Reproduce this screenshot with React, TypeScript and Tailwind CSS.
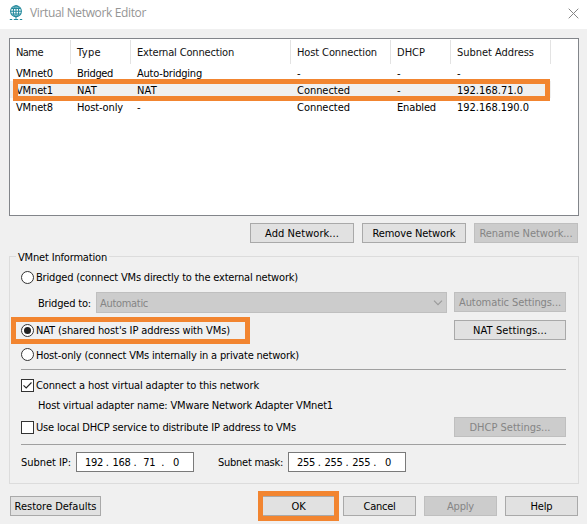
import { useLayoutEffect, useRef, useState } from "react";
import type { ReactNode } from "react";

/* One line of text whose letter spacing is tuned so that it spans `w` pixels. */
function Label({ w, children, className = "" }: { w: number; children: string; className?: string }) {
  const ref = useRef<HTMLSpanElement>(null);
  const [spacing, setSpacing] = useState(0);
  useLayoutEffect(() => {
    const el = ref.current;
    if (!el) return;
    el.style.letterSpacing = "0px";
    const natural = el.getBoundingClientRect().width;
    setSpacing((w - natural) / children.length);
    el.style.letterSpacing = `${(w - natural) / children.length}px`;
  }, [w, children]);
  return (
    <span ref={ref} style={{ letterSpacing: `${spacing}px` }} className={`mt-px -mb-px inline-block whitespace-pre ${className}`}>
      {children}
    </span>
  );
}

function Button({ text, w, className, disabled = false }: { text: string; w: number; className: string; disabled?: boolean }) {
  return (
    <button
      disabled={disabled}
      className={`flex h-5 shrink-0 items-center justify-center border ${
        disabled ? "border-[#bfbfbf] bg-[#cccccc] text-[#858585]" : "border-[#a9a9a9] bg-[#e1e1e1] text-black"
      } ${className}`}
    >
      <Label w={w}>{text}</Label>
    </button>
  );
}

function Radio({ checked = false }: { checked?: boolean }) {
  return (
    <span className="flex size-[13px] shrink-0 items-center justify-center rounded-full border border-[#333] bg-white">
      {checked && <span className="size-[7px] rounded-full bg-[#222]" />}
    </span>
  );
}

function Checkbox({ checked = false }: { checked?: boolean }) {
  return (
    <span className="flex size-[13px] shrink-0 items-center justify-center border border-[#333] bg-white">
      {checked && (
        <svg width="11" height="11" viewBox="0 0 11 11" fill="none" stroke="#222" strokeWidth="1.1">
          <path d="M1.5 5.3 4.2 8 9.5 2.5" />
        </svg>
      )}
    </span>
  );
}

function Row({ className, children }: { className: string; children: ReactNode }) {
  return <div className={`flex items-center ${className}`}>{children}</div>;
}

function IpField({ parts }: { parts: string[] }) {
  return (
    <div className="flex h-5 w-[118px] items-center border border-[#7a7a7a] bg-white pl-[7px] pr-2">
      <span className="flex w-[20px] justify-center"><Label w={18}>{parts[0]}</Label></span>
      <span className="flex w-[8px] justify-center"><Label w={4}>.</Label></span>
      <span className="flex w-[20px] justify-center"><Label w={18}>{parts[1]}</Label></span>
      <span className="flex w-[8px] justify-center"><Label w={4}>.</Label></span>
      <span className="flex w-[20px] justify-center"><Label w={parts[2].length * 6}>{parts[2]}</Label></span>
      <span className="flex w-[8px] justify-center"><Label w={4}>.</Label></span>
      <span className="flex w-[18px] justify-center"><Label w={6}>{parts[3]}</Label></span>
    </div>
  );
}

type Cell = [string, number];
const header: Cell[] = [["Name", 27], ["Type", 24], ["External Connection", 97], ["Host Connection", 80], ["DHCP", 28], ["Subnet Address", 77]];
const rows: Cell[][] = [
  [["VMnet0", 37], ["Bridged", 36], ["Auto-bridging", 65], ["-", 5], ["-", 5], ["-", 5]],
  [["VMnet1", 37], ["NAT", 20], ["NAT", 20], ["Connected", 53], ["-", 5], ["192.168.71.0", 66]],
  [["VMnet8", 37], ["Host-only", 46], ["-", 5], ["Connected", 53], ["Enabled", 39], ["192.168.190.0", 72]],
];
const grid = "grid grid-cols-[61px_60px_160px_100px_60px_100px]";

export default function App() {
  return (
    <div className="flex h-[524px] w-[587px] flex-col overflow-hidden bg-[#f0f0f0] font-['DejaVu_Sans_Condensed','DejaVu_Sans',sans-serif] text-[11px] leading-[14px] text-black [font-stretch:condensed]">
      <header className="flex h-[29px] shrink-0 items-center bg-white pl-[9px] pr-[8px]">
        <svg width="14" height="16" viewBox="0 0 14 16" fill="none" stroke="#258b9e" strokeWidth="1.1" className="mt-[-3px]">
          <circle cx="7" cy="6.2" r="5.4" />
          <ellipse cx="7" cy="6.2" rx="2.7" ry="5.4" />
          <path d="M1.6 6.2h10.8M2.5 3.4h9M2.5 9h9M7 .8v13M.8 14.5h2.4M4.8 14.5h4.4M10.8 14.5h2.4" />
        </svg>
        <div className="ml-[7px] flex h-[23px] items-center self-start">
          <Label w={116} className="font-['Open_Sans',sans-serif] text-[12px] leading-[18px] text-[#959595] [font-stretch:normal]">Virtual Network Editor</Label>
        </div>
        <svg width="11" height="11" viewBox="0 0 11 11" stroke="#858585" strokeWidth="1" className="ml-auto mt-[-3px]">
          <path d="m.7.7 9.6 9.6M10.3.7.7 10.3" />
        </svg>
      </header>

      <section className="relative ml-[9px] mt-[9px] h-[178px] w-[570px] shrink-0 border border-[#82858a] bg-white">
        <div className={`${grid} mt-px h-[24px] text-[#111]`}>
          {header.map(([text, w]) => (
            <div key={text} className="flex items-center border-r border-[#e3e3e3] pl-[6px]">
              <Label w={w}>{text}</Label>
            </div>
          ))}
        </div>
        {rows.map((cells, r) => (
          <div key={r} className={`${grid} h-[17px] w-[541px] items-center ${r === 1 ? "bg-[#f0f0f0]" : ""}`}>
            {cells.map(([text, w], c) => (
              <div key={c} className="flex pl-[6px]">
                <Label w={w}>{text}</Label>
              </div>
            ))}
          </div>
        ))}
        <div className="absolute left-[3px] top-[40px] h-[22px] w-[537px] border-[5px] border-[#f28530]" />
      </section>

      <div className="ml-[250px] mt-[7px] flex shrink-0 gap-2">
        <Button text="Add Network..." w={74} className="w-[104px]" />
        <Button text="Remove Network" w={83} className="w-[104px]" />
        <Button text="Rename Network..." w={93} className="w-[104px]" disabled />
      </div>

      <section className="relative ml-[9px] mt-[13px] flex h-[228px] w-[570px] shrink-0 flex-col border border-[#dcdcdc] pl-[11px]">
        <div className="absolute left-[6px] top-[-7px] flex bg-[#f0f0f0] px-[2px]">
          <Label w={89}>VMnet Information</Label>
        </div>
        <Row className="mt-[13px] h-[14px] gap-[2px]">
          <Radio />
          <Label w={262}>Bridged (connect VMs directly to the external network)</Label>
        </Row>
        <Row className="mt-[8px] h-[21px]">
          <Label w={53} className="ml-[17px]">Bridged to:</Label>
          <div className="ml-[5px] flex h-[21px] w-[351px] items-center justify-between border border-[#bfbfbf] bg-[#cccccc] pl-[3px] pr-[3px] text-[#858585]">
            <Label w={48}>Automatic</Label>
            <svg width="10" height="6" viewBox="0 0 10 6" fill="none" stroke="#9a9a9a" strokeWidth="1.1">
              <path d="m1 .7 4 4 4-4" />
            </svg>
          </div>
          <Button text="Automatic Settings..." w={102} className="ml-[7px] mb-px w-[112px]" disabled />
        </Row>
        <Row className="mt-[7px] h-5 gap-[2px]">
          <Radio checked />
          <Label w={194}>NAT (shared host's IP address with VMs)</Label>
          <Button text="NAT Settings..." w={74} className="ml-auto mr-[12px] w-[112px]" />
        </Row>
        <Row className="mt-[7px] h-[15px] gap-[2px]">
          <Radio />
          <Label w={263}>Host-only (connect VMs internally in a private network)</Label>
        </Row>
        <div className="mt-[7px] h-px w-[545px] bg-[#a0a0a0]" />
        <Row className="mt-[8px] h-[14px] gap-[2px]">
          <Checkbox checked />
          <Label w={223}>Connect a host virtual adapter to this network</Label>
        </Row>
        <Row className="mt-[5px] h-[15px]">
          <Label w={295} className="ml-[17px]">Host virtual adapter name: VMware Network Adapter VMnet1</Label>
        </Row>
        <Row className="mt-[5px] h-5 gap-[2px]">
          <Checkbox />
          <Label w={260}>Use local DHCP service to distribute IP address to VMs</Label>
          <Button text="DHCP Settings..." w={81} className="ml-auto mr-[12px] w-[112px]" disabled />
        </Row>
        <div className="mt-[7px] h-px w-[545px] bg-[#a0a0a0]" />
        <Row className="mt-[7px] h-5">
          <Label w={50}>Subnet IP:</Label>
          <div className="ml-[5px]"><IpField parts={["192", "168", "71", "0"]} /></div>
          <Label w={65} className="ml-[24px]">Subnet mask:</Label>
          <div className="ml-[5px]"><IpField parts={["255", "255", "255", "0"]} /></div>
        </Row>
        <div className="absolute left-[1px] top-[60px] h-[27px] w-[239px] border-[5px] border-[#f28530]" />
      </section>

      <footer className="ml-[10px] mt-[12px] flex h-5 w-[568px] shrink-0 items-center">
        <Button text="Restore Defaults" w={82} className="w-[91px]" />
        <div className="relative ml-auto">
          <Button text="OK" w={14} className="w-[73px]" />
          <div className="absolute left-[-4px] top-[-5px] h-[30px] w-[81px] border-[5px] border-[#f28530]" />
        </div>
        <Button text="Cancel" w={32} className="ml-2 w-[73px]" />
        <Button text="Apply" w={27} className="ml-2 w-[73px]" disabled />
        <Button text="Help" w={22} className="ml-2 w-[73px]" />
      </footer>
    </div>
  );
}
